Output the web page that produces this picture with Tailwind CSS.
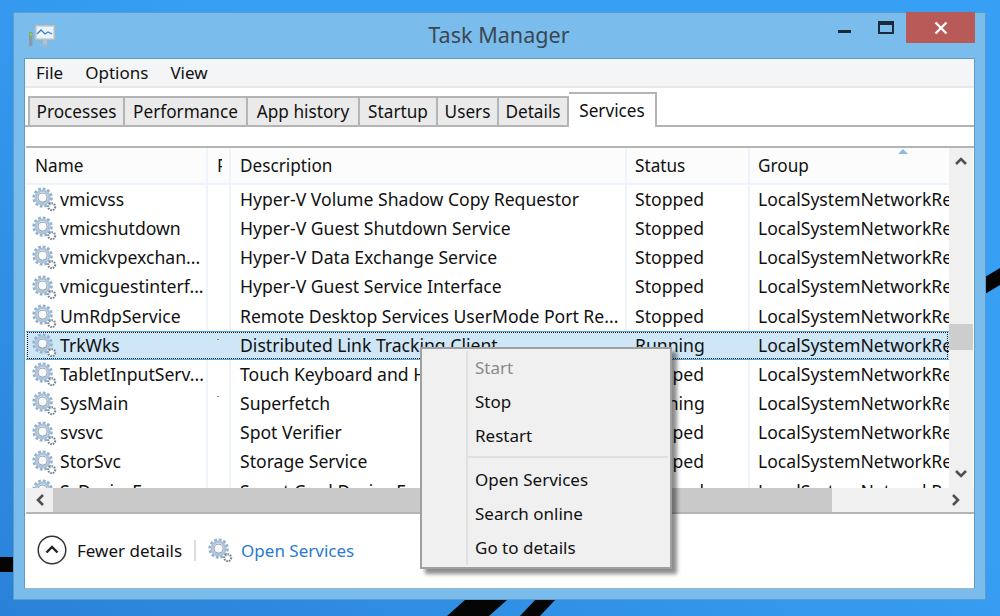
<!DOCTYPE html>
<html lang="en">
<head>
<meta charset="UTF-8">
<title>Task Manager</title>
<script src="https://cdn.jsdelivr.net/npm/@tailwindcss/browser@4"></script>
</head>
<body class="m-0 overflow-hidden">
<svg class="hidden">
  <symbol id="gear" viewBox="0 0 26 26">
    <circle cx="11" cy="11" r="9" fill="none" stroke="#8fb0cf" stroke-width="3.2" stroke-dasharray="2.8 1.9"/>
    <circle cx="11" cy="11" r="7" fill="none" stroke="#adc2d6" stroke-width="2.6"/>
    <circle cx="11" cy="11" r="4.8" fill="#f7f9fb" stroke="#8398ad" stroke-width="1.1"/>
    <circle cx="20.5" cy="20.5" r="3.6" fill="#fff" stroke="#75848f" stroke-width="2.2" stroke-dasharray="1.7 1"/>
  </symbol>
</svg>

<div class="relative w-[1000px] h-[616px] overflow-hidden bg-[linear-gradient(35deg,#2a82d8_0%,#37a0f5_60%)] font-['Noto_Sans',sans-serif] text-[17.6px] leading-none text-[#111]">
  <!-- desktop wallpaper stripes -->
  <div class="absolute left-0 top-[557px] w-[14px] h-[15px] bg-[#050505]"></div>
  <div class="absolute left-[447px] top-[600px] w-[60px] h-[16px] bg-[#050505] [clip-path:polygon(30%_0,100%_0,70%_100%,0_100%)]"></div>
  <div class="absolute left-[520px] top-[600px] w-[35px] h-[16px] bg-[#050505] [clip-path:polygon(43%_0,100%_0,57%_100%,0_100%)]"></div>
  <div class="absolute left-[985px] top-[268px] w-[15px] h-[26px] bg-[#050505] [clip-path:polygon(0_35%,100%_0,100%_65%,0_100%)]"></div>

  <!-- window -->
  <div class="absolute left-[13px] top-[12px] w-[973px] h-[588px] bg-[#7abdec] border border-[#5c9ccb] flex flex-col px-[10px] pb-[10px]">
    <div class="h-[45px] shrink-0 relative flex justify-center items-center">
      <svg class="absolute left-[4px] top-[11px] w-[28px] h-[24px]" viewBox="0 0 28 24">
        <rect x="7" y="1" width="20" height="15" rx="1" fill="#c9d6e0" stroke="#a3b1bc"/>
        <rect x="9" y="3" width="16" height="11" fill="#e9f4fc"/>
        <path d="M9 10l4-4 4 4 3-2 4 2" fill="none" stroke="#3f7fc4" stroke-width="1.3"/>
        <path d="M13 20h8l1 2h-10z" fill="#a8b5c0"/>
        <rect x="15" y="16" width="4" height="4" fill="#b5c2cc"/>
        <rect x="1" y="8" width="3.5" height="14" fill="#8d9aa5"/>
        <rect x="1.5" y="9" width="2.5" height="3" fill="#7ed03d"/>
      </svg>
      <span class="text-[21.6px] text-[#3c4650] -mt-[2px] -ml-[1px]">Task Manager</span>
      <svg class="absolute left-[814px] top-[17px] w-[13px] h-[4px]"><rect width="13" height="3" fill="#1b2a36"/></svg>
      <svg class="absolute left-[854px] top-[8px] w-[16px] h-[14px]"><rect x="1" y="1" width="14" height="11" fill="none" stroke="#1b2a36" stroke-width="2"/><rect x="1" y="1" width="14" height="3" fill="#1b2a36"/></svg>
      <div class="absolute left-[882px] -top-[1px] w-[69px] h-[31px] bg-[#b85a57] flex items-center justify-center">
        <svg class="w-[14px] h-[14px]" viewBox="0 0 14 14"><path d="M1.5 1.5l11 11M12.5 1.5l-11 11" stroke="#fff" stroke-width="2.4"/></svg>
      </div>
    </div>

    <div class="relative flex-1 flex flex-col bg-white border border-[#5c9ccb] border-b-[#9fb6c8] min-h-0">
      <!-- menu bar -->
      <div class="h-[29px] shrink-0 bg-[#f4f5f7] border-b-2 border-[#e8e8e8] flex items-center gap-[22px] pl-[11px] text-[17px]">
        <span>File</span><span>Options</span><span>View</span>
      </div>

      <!-- tabs -->
      <div class="h-[31px] mt-[8px] shrink-0 flex items-end pl-[3px] border-b-2 border-[#b4b4b4] text-[17.2px]">
        <div class="h-[29px] w-[97px] shrink-0 bg-[#eaeaea] border-2 border-b-0 border-[#b4b4b4] flex items-center justify-center">Processes</div>
        <div class="h-[29px] w-[123px] shrink-0 bg-[#eaeaea] border-2 border-l-0 border-b-0 border-[#b4b4b4] flex items-center justify-center">Performance</div>
        <div class="h-[29px] w-[112px] shrink-0 bg-[#eaeaea] border-2 border-l-0 border-b-0 border-[#b4b4b4] flex items-center justify-center">App history</div>
        <div class="h-[29px] w-[78px] shrink-0 bg-[#eaeaea] border-2 border-l-0 border-b-0 border-[#b4b4b4] flex items-center justify-center">Startup</div>
        <div class="h-[29px] w-[61px] shrink-0 bg-[#eaeaea] border-2 border-l-0 border-b-0 border-[#b4b4b4] flex items-center justify-center">Users</div>
        <div class="h-[29px] w-[70px] shrink-0 bg-[#eaeaea] border-2 border-l-0 border-b-0 border-[#b4b4b4] flex items-center justify-center">Details</div>
        <div class="h-[35px] w-[88px] -mb-[2px] shrink-0 bg-white border-2 border-l-0 border-b-0 border-[#b4b4b4] flex items-center justify-center">Services</div>
      </div>

      <div class="h-[19px] shrink-0"></div>

      <!-- list -->
      <div class="ml-[1px] h-[368px] shrink-0 border-y-2 border-[#b4b4b4] flex flex-col">
        <div class="flex h-[340px] shrink-0">
          <div class="w-[923px] shrink-0 overflow-hidden relative">
            <!-- header -->
            <div class="h-[37px] flex bg-[#fcfcfc] border-b-2 border-[#edf4fb] items-center relative text-[17.2px]">
              <div class="w-[182px] pl-[9px] border-r-2 border-[#edf4fb] h-full flex items-center">Name</div>
              <div class="w-[23px] border-r-2 border-[#edf4fb] h-full flex items-center pl-[9px]"><span class="w-[5px] overflow-hidden">P</span></div>
              <div class="w-[396px] pl-[9px] border-r-2 border-[#edf4fb] h-full flex items-center">Description</div>
              <div class="w-[123px] pl-[8px] border-r-2 border-[#edf4fb] h-full flex items-center">Status</div>
              <div class="flex-1 pl-[8px]">Group</div>
              <svg class="absolute left-[871px] top-0 w-[12px] h-[7px]" viewBox="0 0 12 7"><path d="M1 6l5-5 5 5z" fill="#8dbbe0"/></svg>
            </div>

            <!-- rows -->
            <div class="flex h-[29.2px] items-center">
              <div class="w-[182px] shrink-0 h-full flex items-center pl-[6px] gap-[3px] border-r-2 border-[#edf4fb]"><svg class="w-[25px] h-[25px] shrink-0"><use href="#gear"/></svg><span class="whitespace-nowrap">vmicvss</span></div>
              <div class="w-[23px] shrink-0 h-full border-r-2 border-[#edf4fb]"></div>
              <div class="w-[396px] shrink-0 h-full flex items-center pl-[9px] border-r-2 border-[#edf4fb] whitespace-nowrap">Hyper-V Volume Shadow Copy Requestor</div>
              <div class="w-[123px] shrink-0 h-full flex items-center pl-[8px] border-r-2 border-[#edf4fb]">Stopped</div>
              <div class="pl-[8px] whitespace-nowrap">LocalSystemNetworkRestricted</div>
            </div>
            <div class="flex h-[29.2px] items-center">
              <div class="w-[182px] shrink-0 h-full flex items-center pl-[6px] gap-[3px] border-r-2 border-[#edf4fb]"><svg class="w-[25px] h-[25px] shrink-0"><use href="#gear"/></svg><span class="whitespace-nowrap">vmicshutdown</span></div>
              <div class="w-[23px] shrink-0 h-full border-r-2 border-[#edf4fb]"></div>
              <div class="w-[396px] shrink-0 h-full flex items-center pl-[9px] border-r-2 border-[#edf4fb] whitespace-nowrap">Hyper-V Guest Shutdown Service</div>
              <div class="w-[123px] shrink-0 h-full flex items-center pl-[8px] border-r-2 border-[#edf4fb]">Stopped</div>
              <div class="pl-[8px] whitespace-nowrap">LocalSystemNetworkRestricted</div>
            </div>
            <div class="flex h-[29.2px] items-center">
              <div class="w-[182px] shrink-0 h-full flex items-center pl-[6px] gap-[3px] border-r-2 border-[#edf4fb]"><svg class="w-[25px] h-[25px] shrink-0"><use href="#gear"/></svg><span class="whitespace-nowrap">vmickvpexchan...</span></div>
              <div class="w-[23px] shrink-0 h-full border-r-2 border-[#edf4fb]"></div>
              <div class="w-[396px] shrink-0 h-full flex items-center pl-[9px] border-r-2 border-[#edf4fb] whitespace-nowrap">Hyper-V Data Exchange Service</div>
              <div class="w-[123px] shrink-0 h-full flex items-center pl-[8px] border-r-2 border-[#edf4fb]">Stopped</div>
              <div class="pl-[8px] whitespace-nowrap">LocalSystemNetworkRestricted</div>
            </div>
            <div class="flex h-[29.2px] items-center">
              <div class="w-[182px] shrink-0 h-full flex items-center pl-[6px] gap-[3px] border-r-2 border-[#edf4fb]"><svg class="w-[25px] h-[25px] shrink-0"><use href="#gear"/></svg><span class="whitespace-nowrap">vmicguestinterf...</span></div>
              <div class="w-[23px] shrink-0 h-full border-r-2 border-[#edf4fb]"></div>
              <div class="w-[396px] shrink-0 h-full flex items-center pl-[9px] border-r-2 border-[#edf4fb] whitespace-nowrap">Hyper-V Guest Service Interface</div>
              <div class="w-[123px] shrink-0 h-full flex items-center pl-[8px] border-r-2 border-[#edf4fb]">Stopped</div>
              <div class="pl-[8px] whitespace-nowrap">LocalSystemNetworkRestricted</div>
            </div>
            <div class="flex h-[29.2px] items-center">
              <div class="w-[182px] shrink-0 h-full flex items-center pl-[6px] gap-[3px] border-r-2 border-[#edf4fb]"><svg class="w-[25px] h-[25px] shrink-0"><use href="#gear"/></svg><span class="whitespace-nowrap">UmRdpService</span></div>
              <div class="w-[23px] shrink-0 h-full border-r-2 border-[#edf4fb]"></div>
              <div class="w-[396px] shrink-0 h-full flex items-center pl-[9px] border-r-2 border-[#edf4fb] whitespace-nowrap">Remote Desktop Services UserMode Port Re...</div>
              <div class="w-[123px] shrink-0 h-full flex items-center pl-[8px] border-r-2 border-[#edf4fb]">Stopped</div>
              <div class="pl-[8px] whitespace-nowrap">LocalSystemNetworkRestricted</div>
            </div>
            <div class="flex h-[29.2px] items-center bg-[#cee6f5] outline-1 outline-dotted -outline-offset-2 outline-[#1a1a1a] border-y border-[#53a9e4]">
              <div class="w-[182px] shrink-0 h-full flex items-center pl-[6px] gap-[3px]"><svg class="w-[25px] h-[25px] shrink-0"><use href="#gear"/></svg><span class="whitespace-nowrap">TrkWks</span></div>
              <div class="w-[23px] shrink-0 h-full pl-[9px] pt-[7px]"><div class="w-[2px] h-[1px] bg-[#c08040]"></div></div>
              <div class="w-[396px] shrink-0 h-full flex items-center pl-[9px] whitespace-nowrap">Distributed Link Tracking Client</div>
              <div class="w-[123px] shrink-0 h-full flex items-center pl-[8px]">Running</div>
              <div class="pl-[8px] whitespace-nowrap">LocalSystemNetworkRestricted</div>
            </div>
            <div class="flex h-[29.2px] items-center">
              <div class="w-[182px] shrink-0 h-full flex items-center pl-[6px] gap-[3px] border-r-2 border-[#edf4fb]"><svg class="w-[25px] h-[25px] shrink-0"><use href="#gear"/></svg><span class="whitespace-nowrap">TabletInputServ...</span></div>
              <div class="w-[23px] shrink-0 h-full border-r-2 border-[#edf4fb]"></div>
              <div class="w-[396px] shrink-0 h-full flex items-center pl-[9px] border-r-2 border-[#edf4fb] whitespace-nowrap">Touch Keyboard and Handwriting Panel Service</div>
              <div class="w-[123px] shrink-0 h-full flex items-center pl-[8px] border-r-2 border-[#edf4fb]">Stopped</div>
              <div class="pl-[8px] whitespace-nowrap">LocalSystemNetworkRestricted</div>
            </div>
            <div class="flex h-[29.2px] items-center">
              <div class="w-[182px] shrink-0 h-full flex items-center pl-[6px] gap-[3px] border-r-2 border-[#edf4fb]"><svg class="w-[25px] h-[25px] shrink-0"><use href="#gear"/></svg><span class="whitespace-nowrap">SysMain</span></div>
              <div class="w-[23px] shrink-0 h-full border-r-2 border-[#edf4fb] pl-[9px] pt-[7px]"><div class="w-[2px] h-[1px] bg-[#c08040]"></div></div>
              <div class="w-[396px] shrink-0 h-full flex items-center pl-[9px] border-r-2 border-[#edf4fb] whitespace-nowrap">Superfetch</div>
              <div class="w-[123px] shrink-0 h-full flex items-center pl-[8px] border-r-2 border-[#edf4fb]">Running</div>
              <div class="pl-[8px] whitespace-nowrap">LocalSystemNetworkRestricted</div>
            </div>
            <div class="flex h-[29.2px] items-center">
              <div class="w-[182px] shrink-0 h-full flex items-center pl-[6px] gap-[3px] border-r-2 border-[#edf4fb]"><svg class="w-[25px] h-[25px] shrink-0"><use href="#gear"/></svg><span class="whitespace-nowrap">svsvc</span></div>
              <div class="w-[23px] shrink-0 h-full border-r-2 border-[#edf4fb]"></div>
              <div class="w-[396px] shrink-0 h-full flex items-center pl-[9px] border-r-2 border-[#edf4fb] whitespace-nowrap">Spot Verifier</div>
              <div class="w-[123px] shrink-0 h-full flex items-center pl-[8px] border-r-2 border-[#edf4fb]">Stopped</div>
              <div class="pl-[8px] whitespace-nowrap">LocalSystemNetworkRestricted</div>
            </div>
            <div class="flex h-[29.2px] items-center">
              <div class="w-[182px] shrink-0 h-full flex items-center pl-[6px] gap-[3px] border-r-2 border-[#edf4fb]"><svg class="w-[25px] h-[25px] shrink-0"><use href="#gear"/></svg><span class="whitespace-nowrap">StorSvc</span></div>
              <div class="w-[23px] shrink-0 h-full border-r-2 border-[#edf4fb]"></div>
              <div class="w-[396px] shrink-0 h-full flex items-center pl-[9px] border-r-2 border-[#edf4fb] whitespace-nowrap">Storage Service</div>
              <div class="w-[123px] shrink-0 h-full flex items-center pl-[8px] border-r-2 border-[#edf4fb]">Stopped</div>
              <div class="pl-[8px] whitespace-nowrap">LocalSystemNetworkRestricted</div>
            </div>
            <div class="flex h-[29.2px] items-center">
              <div class="w-[182px] shrink-0 h-full flex items-center pl-[6px] gap-[3px] border-r-2 border-[#edf4fb]"><svg class="w-[25px] h-[25px] shrink-0"><use href="#gear"/></svg><span class="whitespace-nowrap">ScDeviceEnum</span></div>
              <div class="w-[23px] shrink-0 h-full border-r-2 border-[#edf4fb]"></div>
              <div class="w-[396px] shrink-0 h-full flex items-center pl-[9px] border-r-2 border-[#edf4fb] whitespace-nowrap">Smart Card Device Enumeration Service</div>
              <div class="w-[123px] shrink-0 h-full flex items-center pl-[8px] border-r-2 border-[#edf4fb]">Stopped</div>
              <div class="pl-[8px] whitespace-nowrap">LocalSystemNetworkRestricted</div>
            </div>
          </div>

          <!-- vertical scrollbar -->
          <div class="relative w-[24px] shrink-0 bg-[#f0f0f0]">
            <svg class="absolute left-[5px] top-[8px] w-[14px] h-[10px]" viewBox="0 0 14 10"><path d="M2 8l5-5 5 5" fill="none" stroke="#505050" stroke-width="2.6"/></svg>
            <div class="absolute left-0 top-[176px] w-full h-[26px] bg-[#cdcdcd]"></div>
            <svg class="absolute left-[5px] top-[321px] w-[14px] h-[10px]" viewBox="0 0 14 10"><path d="M2 2l5 5 5-5" fill="none" stroke="#505050" stroke-width="2.6"/></svg>
          </div>
        </div>

        <!-- horizontal scrollbar -->
        <div class="flex-1 flex bg-[#f0f0f0] items-stretch">
          <div class="w-[27px] shrink-0 flex items-center justify-center"><svg class="w-[10px] h-[14px]" viewBox="0 0 10 14"><path d="M8 2L3 7l5 5" fill="none" stroke="#505050" stroke-width="2.6"/></svg></div>
          <div class="w-[779px] shrink-0 bg-[#c9c9c9]"></div>
          <div class="flex-1 flex items-center justify-end pr-[13px]"><svg class="w-[10px] h-[14px]" viewBox="0 0 10 14"><path d="M2 2l5 5-5 5" fill="none" stroke="#505050" stroke-width="2.6"/></svg></div>
        </div>
      </div>

      <!-- footer -->
      <div class="flex-1 flex items-center pl-[12px] pb-[2px] text-[17px]">
        <svg class="w-[30px] h-[30px] shrink-0" viewBox="0 0 30 30"><circle cx="15" cy="15" r="13.8" fill="none" stroke="#333" stroke-width="1.5"/><path d="M9.5 17.5l5.5-5.5 5.5 5.5" fill="none" stroke="#222" stroke-width="2.4"/></svg>
        <span class="ml-[10px]">Fewer details</span>
        <div class="w-[2px] h-[21px] bg-[#dcdcdc] ml-[12px]"></div>
        <svg class="w-[25px] h-[25px] ml-[12px] shrink-0"><use href="#gear"/></svg>
        <span class="ml-[8px] text-[#2a7ad2]">Open Services</span>
      </div>

      <!-- context menu -->
      <div class="absolute left-[395px] top-[288px] w-[252px] h-[222px] bg-[#f0f0f0] border-2 border-[#a0a0a0] shadow-[5px_5px_4px_rgba(0,0,0,0.45)] flex flex-col pl-[45px] pt-[1px] pb-[3px] text-[17px]">
        <div class="absolute left-[44px] top-[2px] bottom-[2px] w-[2px] bg-[#e0e0e0]"></div>
        <div class="h-[34px] flex items-center pl-[8px] text-[#8a8a8a]">Start</div>
        <div class="h-[34px] flex items-center pl-[8px]">Stop</div>
        <div class="h-[34px] flex items-center pl-[8px]">Restart</div>
        <div class="h-[2px] bg-[#e0e0e0] my-[4px] mr-[2px]"></div>
        <div class="h-[34px] flex items-center pl-[8px]">Open Services</div>
        <div class="h-[34px] flex items-center pl-[8px]">Search online</div>
        <div class="h-[34px] flex items-center pl-[8px]">Go to details</div>
      </div>
    </div>
  </div>
</div>
</body>
</html>
